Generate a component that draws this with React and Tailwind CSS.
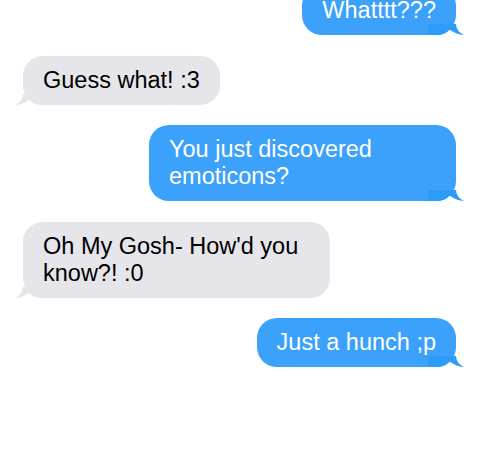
import React from "react";

const messages = [
    { id: 1, fromMe: true, text: "Whatttt???" },
    { id: 2, fromMe: false, text: "Guess what! :3" },
    { id: 3, fromMe: true, text: "You just discovered emoticons?" },
    { id: 4, fromMe: false, text: "Oh My Gosh- How'd you know?! :0" },
    { id: 5, fromMe: true, text: "Just a hunch ;p" },
];

// bubble tail, drawn for the right side and mirrored for received messages
function Tail({ fromMe }) {
    return (
        <svg
            viewBox="0 0 40 16"
            className={
                fromMe
                    ? "absolute bottom-0 right-[-10px] w-10 h-4"
                    : "absolute bottom-0 left-[-10px] w-10 h-4 -scale-x-100"
            }
        >
            <path
                d="M2 5H30Q30.5 12.5 38 16Q30.5 15.5 23.5 10.5Q20 15 13 16H2Z"
                fill={fromMe ? "#2b9cf8" : "#e5e5ea"}
            />
        </svg>
    );
}

export default function App() {
    return (
        <div className="min-h-[450px] bg-white overflow-hidden font-['Liberation_Sans',Arial,sans-serif]">
            <div className="-mt-[14px] flex flex-col gap-[20.5px] pl-[23px] pr-6 text-[23.5px] leading-[27px]">
                {messages.map((m) => (
                    <div key={m.id} className={m.fromMe ? "flex justify-end" : "flex justify-start"}>
                        <p
                            className={
                                m.fromMe
                                    ? "relative max-w-[307px] rounded-[20px] px-5 py-[11px] bg-[#3ba1fa] text-white"
                                    : "relative max-w-[307px] rounded-[20px] px-5 py-[11px] bg-[#e5e5ea] text-black"
                            }
                        >
                            <Tail fromMe={m.fromMe} />
                            <span className="relative">{m.text}</span>
                        </p>
                    </div>
                ))}
            </div>
        </div>
    );
}
